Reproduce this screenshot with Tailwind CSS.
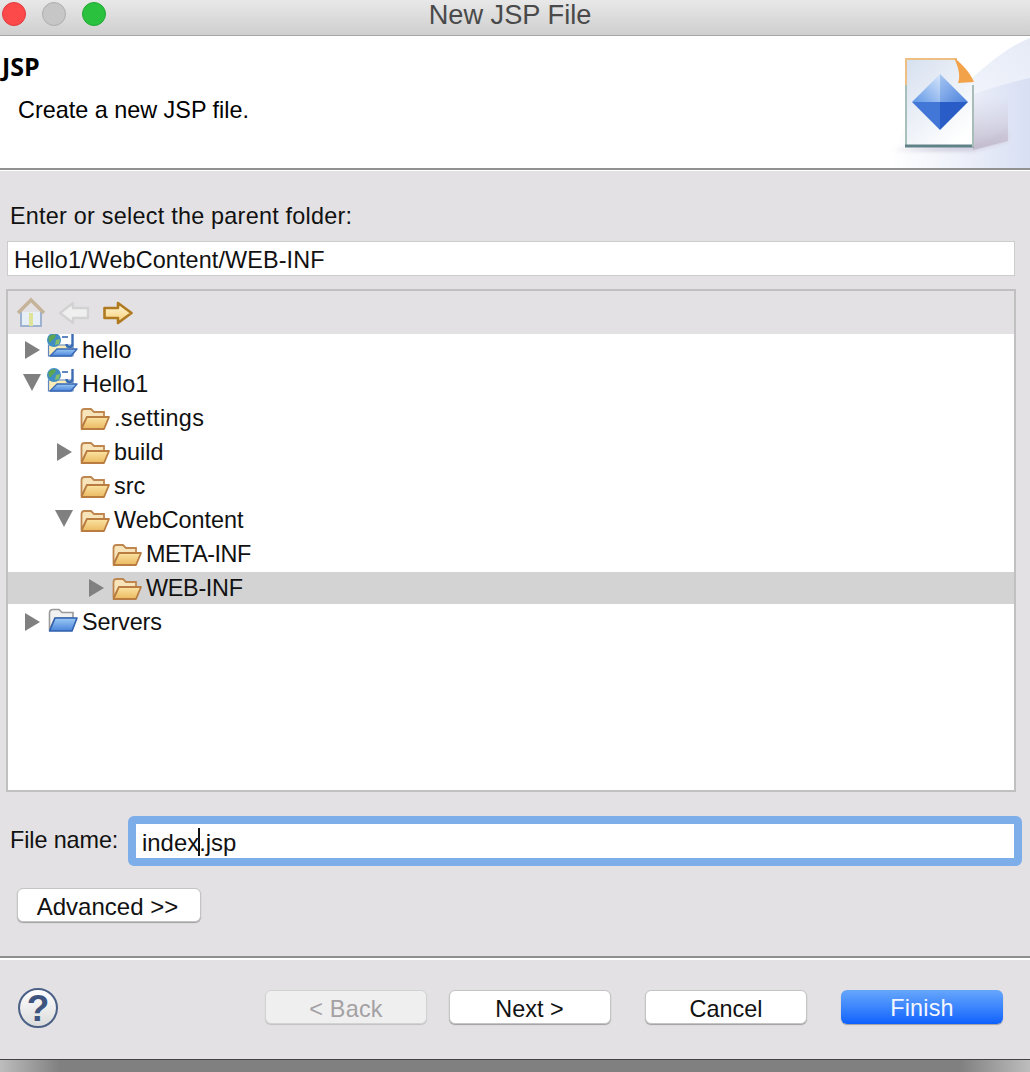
<!DOCTYPE html>
<html lang="en">
<head>
    <meta charset="UTF-8">
    <title>New JSP File</title>
    <script src="https://cdn.jsdelivr.net/npm/@tailwindcss/browser@4"></script>
</head>
<body class="bg-[#808080]">
    <svg width="0" height="0" class="absolute">
        <defs>
            <filter id="soft" x="-10%" y="-10%" width="120%" height="120%"><feGaussianBlur stdDeviation="0.45"/></filter>
            <filter id="softer" x="-10%" y="-10%" width="120%" height="120%"><feGaussianBlur stdDeviation="0.7"/></filter>
            <filter id="shadow" x="-20%" y="-20%" width="140%" height="140%"><feGaussianBlur stdDeviation="2"/></filter>
            <linearGradient id="folderFront" x1="0" y1="0" x2="0" y2="1">
                <stop offset="0" stop-color="#fbe3a5"/>
                <stop offset="1" stop-color="#ebb95f"/>
            </linearGradient>
            <linearGradient id="blueFront" x1="0" y1="0" x2="0" y2="1">
                <stop offset="0" stop-color="#9ccaf5"/>
                <stop offset="1" stop-color="#4a84da"/>
            </linearGradient>
            <linearGradient id="diamondTopLeft" x1="0" y1="1" x2="1" y2="0">
                <stop offset="0" stop-color="#5f96e6"/>
                <stop offset="1" stop-color="#d6e6fa"/>
            </linearGradient>
            <linearGradient id="diamondTopRight" x1="0" y1="0" x2="1" y2="1">
                <stop offset="0" stop-color="#a6c6f2"/>
                <stop offset="1" stop-color="#4d82dc"/>
            </linearGradient>
            <linearGradient id="pageFill" x1="0" y1="0" x2="0.7" y2="1">
                <stop offset="0" stop-color="#d6e0ef"/>
                <stop offset="1" stop-color="#ffffff"/>
            </linearGradient>
            <linearGradient id="swoosh" x1="0" y1="1" x2="1" y2="0">
                <stop offset="0" stop-color="#ffffff"/>
                <stop offset="1" stop-color="#e6ebf7"/>
            </linearGradient>
            <linearGradient id="band" x1="0" y1="0" x2="1" y2="0">
                <stop offset="0" stop-color="#ffffff"/>
                <stop offset="0.5" stop-color="#eef1fa"/>
                <stop offset="1" stop-color="#d8dff3"/>
            </linearGradient>
            <linearGradient id="shadowFill" x1="0" y1="0" x2="1" y2="0">
                <stop offset="0" stop-color="#b6aec4"/>
                <stop offset="1" stop-color="#d6d4e6"/>
            </linearGradient>
            <linearGradient id="shadowSide" x1="0" y1="0" x2="0" y2="1">
                <stop offset="0" stop-color="#d2cede" stop-opacity="0"/>
                <stop offset="1" stop-color="#c2bbcd"/>
            </linearGradient>
            <linearGradient id="arrowFill" x1="0" y1="0" x2="0" y2="1">
                <stop offset="0" stop-color="#fff8dc"/>
                <stop offset="1" stop-color="#f7cd72"/>
            </linearGradient>
            <symbol id="folder" viewBox="0 0 30 22">
                <g filter="url(#soft)">
                    <path d="M1.5 20V4Q1.5 1 4.5 1H11L14 4H24V9H7L1.5 20Z" fill="#f8e4ba" stroke="#bd8750" stroke-width="1.8"/>
                    <path d="M1.5 21L7 9H29L24 21Z" fill="url(#folderFront)" stroke="#b97d42" stroke-width="1.8" stroke-linejoin="round"/>
                </g>
            </symbol>
            <symbol id="blue-folder" viewBox="0 0 30 24">
                <g filter="url(#soft)">
                    <path d="M1.5 22V5Q1.5 1.5 5 1.5H11L14 4.5H25V10H7L1.5 22Z" fill="#f1f1f1" stroke="#9a9a9a" stroke-width="1.6"/>
                    <path d="M1.5 23L7 10H29L24 23Z" fill="url(#blueFront)" stroke="#3160ae" stroke-width="1.6" stroke-linejoin="round"/>
                </g>
            </symbol>
            <symbol id="project" viewBox="0 0 31 24">
                <g filter="url(#soft)">
                    <path d="M1.5 23V12H26V23Z" fill="#f8ecb8" stroke="#5f86bf" stroke-width="1.2"/>
                    <path d="M3 23L10 16H30L24 23Z" fill="url(#blueFront)" stroke="#3a68b4" stroke-width="1.4" stroke-linejoin="round"/>
                    <path d="M25.5 1V11Q25.5 14 22.5 14T19.5 11" fill="none" stroke="#3a6cb4" stroke-width="2.4"/>
                    <path d="M15 4H21" stroke="#5f86bf" stroke-width="2"/>
                    <circle cx="7" cy="7" r="7" fill="#3f8dc4"/>
                    <path d="M1.5 4Q6 0 9 2Q8 6 5 7Q4 10 2 9Z" fill="#5ca553"/>
                    <path d="M9 7L13 6L12 11L8 12Z" fill="#86bd6a"/>
                </g>
            </symbol>
            <symbol id="tri-right" viewBox="0 0 23 32"><path d="M2 7L17 16L2 25Z" fill="#808080"/></symbol>
            <symbol id="tri-down" viewBox="0 0 23 32"><path d="M0 6H18L9 23Z" fill="#808080"/></symbol>
        </defs>
    </svg>

    <div class="w-[1030px] h-[1072px] overflow-hidden flex flex-col bg-[#808080] text-[23.4px] text-[#111] [font-family:'Liberation_Sans',sans-serif]">
        <div class="h-[1060px] flex flex-col bg-[#e3e1e4]">
            <!-- title bar -->
            <div class="h-[36px] shrink-0 grid grid-cols-[1fr_auto_1fr] items-start pr-[10px] border-b border-[#a5a5a5] bg-gradient-to-b from-[#e8e8e8] to-[#cfcfcf]">
                <div class="flex gap-[16px] pl-[2px] pt-[2px]">
                    <span class="w-[24px] h-[24px] rounded-full bg-[#fc4a4b] border border-[#e0393c]"></span>
                    <span class="w-[24px] h-[24px] rounded-full bg-[#c6c6c6] border border-[#adadad]"></span>
                    <span class="w-[24px] h-[24px] rounded-full bg-[#2ac13f] border border-[#20a832]"></span>
                </div>
                <div class="text-[27.2px] leading-[30px] text-[#4a4a4a]">New JSP File</div>
                <div></div>
            </div>

            <!-- banner -->
            <div class="h-[132px] shrink-0 flex justify-between bg-white">
                <div>
                    <div class="pl-[2px] pt-[14px] leading-[33px] text-[25px] font-bold text-black [font-family:'Open_Sans',sans-serif]">JSP</div>
                    <div class="pl-[18px] pt-[13px] leading-[28px] text-black">Create a new JSP file.</div>
                </div>
                <svg width="140" height="132" viewBox="890 36 140 132">
                    <path d="M890 168C925 125 985 55 1030 38V168Z" fill="url(#swoosh)"/>
                    <path d="M905 125C950 100 1000 84 1030 78V168H890Z" fill="url(#band)"/>
                    <path d="M892 150L973 146L1008 130V142L973 151Z" fill="url(#shadowFill)" filter="url(#shadow)"/>
                    <path d="M973 95H1008V141L973 150Z" fill="url(#shadowSide)" filter="url(#softer)"/>
                    <g filter="url(#softer)">
                        <path d="M906 59H957L973 80V147H906Z" fill="url(#pageFill)"/>
                        <path d="M906 147V59H957" fill="none" stroke="#eebf84" stroke-width="2"/>
                        <path d="M906 147V85" fill="none" stroke="#a8c0bc" stroke-width="2"/>
                        <path d="M905 146H974" stroke="#5f8288" stroke-width="3"/>
                        <path d="M973 147V85" fill="none" stroke="#a8bcb8" stroke-width="2"/>
                        <path d="M954 58C960 62 970 72 974 82L958 83C961 76 958 66 954 58Z" fill="#f2a24a"/>
                        <path d="M912 102L940 74V102Z" fill="url(#diamondTopLeft)"/>
                        <path d="M940 74L968 102H940Z" fill="url(#diamondTopRight)"/>
                        <path d="M912 102H940V130Z" fill="#4277d8"/>
                        <path d="M968 102H940V130Z" fill="#2a5cc8"/>
                    </g>
                </svg>
            </div>
            <div class="h-[3px] shrink-0 border-t-2 border-[#919191] bg-white"></div>

            <div class="flex-1 flex flex-col px-[7px]">
                <div class="mt-[30px] mb-[10px] h-[30px] leading-[30px] pl-[3px] tracking-[0.24px]">Enter or select the parent folder:</div>
                <div class="w-[1008px] h-[35px] leading-[36px] pl-[6px] bg-white border border-[#cccccc] tracking-[0.12px]">Hello1/WebContent/WEB-INF</div>

                <!-- folder tree -->
                <div class="mt-[13px] -ml-[1px] w-[1010px] h-[503px] flex flex-col border-2 border-[#c0c0c0]">
                    <div class="h-[43px] shrink-0 flex items-center">
                        <svg width="28" height="32" viewBox="0 0 28 32" class="ml-[9px]" filter="url(#soft)">
                            <path d="M4 15V29H24V15" fill="#e6eef6" stroke="#9db2cf" stroke-width="2"/>
                            <path d="M1 16L14 3L27 16" fill="none" stroke="#c5b49a" stroke-width="3.5"/>
                            <path d="M12 16H16V29H12Z" fill="#dfe39a"/>
                        </svg>
                        <svg width="32" height="24" viewBox="0 0 32 24" class="ml-[13px]" filter="url(#soft)">
                            <path d="M2 12L15 2V7H30V17H15V22Z" fill="#efefef" stroke="#d2d2d2" stroke-width="2.4" stroke-linejoin="round"/>
                        </svg>
                        <svg width="30" height="24" viewBox="0 0 30 24" class="ml-[13px]" filter="url(#soft)">
                            <path d="M1.5 7H15V2L28.5 12L15 22V17H1.5Z" fill="url(#arrowFill)" stroke="#b07a20" stroke-width="2.6" stroke-linejoin="round"/>
                        </svg>
                    </div>
                    <div class="flex-1 flex flex-col gap-[2px] bg-white">
                        <div class="h-[32px] flex items-start pl-[15px] overflow-hidden">
                            <svg class="w-[23px] h-[32px] shrink-0"><use href="#tri-right"/></svg>
                            <svg class="w-[36px] h-[24px] shrink-0 -mt-[1px]" viewBox="0 0 36 24"><use href="#project" width="31" height="24" x="1"/></svg>
                            <span class="leading-[32px]">hello</span>
                        </div>
                        <div class="h-[32px] flex items-start pl-[15px]">
                            <svg class="w-[23px] h-[32px] shrink-0"><use href="#tri-down"/></svg>
                            <svg class="w-[36px] h-[24px] shrink-0" viewBox="0 0 36 24"><use href="#project" width="31" height="24" x="1"/></svg>
                            <span class="leading-[32px]">Hello1</span>
                        </div>
                        <div class="h-[32px] flex items-start pl-[70px]">
                            <svg class="w-[36px] h-[22px] mt-[6px] shrink-0" viewBox="0 0 36 22"><use href="#folder" width="30" height="22" x="2"/></svg>
                            <span class="leading-[32px] tracking-[0.35px]">.settings</span>
                        </div>
                        <div class="h-[32px] flex items-start pl-[47px]">
                            <svg class="w-[23px] h-[32px] shrink-0"><use href="#tri-right"/></svg>
                            <svg class="w-[36px] h-[22px] mt-[6px] shrink-0" viewBox="0 0 36 22"><use href="#folder" width="30" height="22" x="2"/></svg>
                            <span class="leading-[32px]">build</span>
                        </div>
                        <div class="h-[32px] flex items-start pl-[70px]">
                            <svg class="w-[36px] h-[22px] mt-[6px] shrink-0" viewBox="0 0 36 22"><use href="#folder" width="30" height="22" x="2"/></svg>
                            <span class="leading-[32px]">src</span>
                        </div>
                        <div class="h-[32px] flex items-start pl-[47px]">
                            <svg class="w-[23px] h-[32px] shrink-0"><use href="#tri-down"/></svg>
                            <svg class="w-[36px] h-[22px] mt-[6px] shrink-0" viewBox="0 0 36 22"><use href="#folder" width="30" height="22" x="2"/></svg>
                            <span class="leading-[32px]">WebContent</span>
                        </div>
                        <div class="h-[32px] flex items-start pl-[102px]">
                            <svg class="w-[36px] h-[22px] mt-[6px] shrink-0" viewBox="0 0 36 22"><use href="#folder" width="30" height="22" x="2"/></svg>
                            <span class="leading-[32px] tracking-[-0.5px]">META-INF</span>
                        </div>
                        <div class="h-[32px] flex items-start pl-[79px] bg-[#d3d3d3]">
                            <svg class="w-[23px] h-[32px] shrink-0"><use href="#tri-right"/></svg>
                            <svg class="w-[36px] h-[22px] mt-[6px] shrink-0" viewBox="0 0 36 22"><use href="#folder" width="30" height="22" x="2"/></svg>
                            <span class="leading-[32px] tracking-[-0.3px]">WEB-INF</span>
                        </div>
                        <div class="h-[32px] flex items-start pl-[15px]">
                            <svg class="w-[23px] h-[32px] shrink-0"><use href="#tri-right"/></svg>
                            <svg class="w-[36px] h-[24px] mt-[2px] shrink-0" viewBox="0 0 36 24"><use href="#blue-folder" width="30" height="24" x="2"/></svg>
                            <span class="leading-[32px] tracking-[-0.1px]">Servers</span>
                        </div>
                    </div>
                </div>

                <div class="mt-[24px] flex items-center">
                    <div class="w-[121px] pl-[3px] tracking-[-0.1px]">File name:</div>
                    <div class="w-[894px] h-[50px] border-[8px] border-[#7eaeea] rounded-[6px] bg-white pl-[6px] leading-[37px] text-[23.9px] flex">
                        <span>index</span><span class="w-[2px] h-[28px] mt-[4px] -mx-[1px] bg-[#111]"></span><span>.jsp</span>
                    </div>
                </div>
                <button class="mt-[22px] ml-[10px] w-[184px] h-[34px] pr-[3px] shrink-0 bg-white border border-[#c4c4c4] rounded-[6px] shadow-[0_1px_1px_rgba(0,0,0,0.3)] text-[24px]">Advanced &gt;&gt;</button>
            </div>

            <div class="h-[4px] shrink-0 border-t-2 border-[#8f8f8f] border-b-2 border-b-white"></div>

            <div class="h-[100px] shrink-0 flex items-start pt-[28px] border-b border-[#444444]">
                <div class="ml-[18px] w-[40px] h-[40px] rounded-full border-2 border-[#4a6086] bg-gradient-to-b from-white to-[#dcdcdc] flex items-center justify-center text-[37px] leading-none font-bold text-[#3e557f]">?</div>
                <button class="ml-[207px] mt-[2px] w-[162px] h-[34px] pt-[1px] bg-[#f0eff0] border border-[#d2d2d2] rounded-[6px] text-[#a3a1a3] tracking-[0.2px] shadow-[0_1px_1px_rgba(0,0,0,0.15)]">&lt; Back</button>
                <button class="ml-[22px] mt-[2px] w-[162px] h-[34px] pt-[1px] pr-[1px] bg-white border border-[#c4c4c4] rounded-[6px] shadow-[0_1px_1px_rgba(0,0,0,0.3)]">Next &gt;</button>
                <button class="ml-[34px] mt-[2px] w-[162px] h-[34px] pt-[1px] bg-white border border-[#c4c4c4] rounded-[6px] shadow-[0_1px_1px_rgba(0,0,0,0.3)]">Cancel</button>
                <button class="ml-[34px] mt-[2px] w-[162px] h-[34px] pt-[1px] bg-gradient-to-b from-[#66a6fb] to-[#0c60fd] rounded-[6px] text-[#f4f6ff] tracking-[0.2px] shadow-[0_1px_1px_rgba(0,0,0,0.3)]">Finish</button>
            </div>
        </div>
        <div class="flex-1 bg-[linear-gradient(to_right,#bdbdbd,#808080_60px,#808080_960px,#bdbdbd)]"></div>
    </div>
</body>
</html>
